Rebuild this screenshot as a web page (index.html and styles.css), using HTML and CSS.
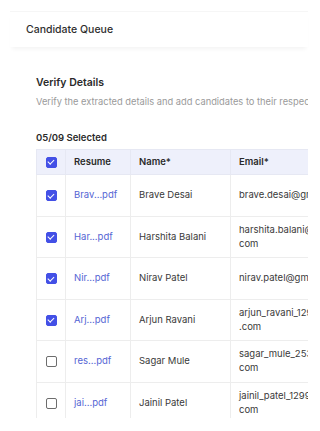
FILE: index.html
```html
<!DOCTYPE html>
<html lang="en">
<head>
    <meta charset="UTF-8">
    <meta name="viewport" content="width=device-width, initial-scale=1.0">
    <title>Candidate Queue</title>
    <link rel="stylesheet" href="styles.css">
</head>
<body>
    <div class="page">
        <div class="topbar">Candidate Queue</div>

        <div class="panel">
            <h2 class="title">Verify Details</h2>
            <p class="subtitle">Verify the extracted details and add candidates to their respective jobs</p>

            <div class="count">05/09 Selected</div>

            <table class="queue">
                <colgroup>
                    <col class="col-check">
                    <col class="col-resume">
                    <col class="col-name">
                    <col class="col-email">
                    <col class="col-phone">
                </colgroup>
                <thead>
                    <tr>
                        <th><span class="box checked"></span></th>
                        <th>Resume</th>
                        <th>Name*</th>
                        <th>Email*</th>
                        <th>Phone*</th>
                    </tr>
                </thead>
                <tbody>
                    <tr>
                        <td><span class="box checked"></span></td>
                        <td><a href="#">Brav...pdf</a></td>
                        <td>Brave Desai</td>
                        <td class="email">brave.desai@gmail.com</td>
                        <td>9876543210</td>
                    </tr>
                    <tr>
                        <td><span class="box checked"></span></td>
                        <td><a href="#">Har...pdf</a></td>
                        <td>Harshita Balani</td>
                        <td class="email">harshita.balani@gmail.<wbr>com</td>
                        <td>9876543211</td>
                    </tr>
                    <tr>
                        <td><span class="box checked"></span></td>
                        <td><a href="#">Nir...pdf</a></td>
                        <td>Nirav Patel</td>
                        <td class="email">nirav.patel@gmail.com</td>
                        <td>9876543212</td>
                    </tr>
                    <tr>
                        <td><span class="box checked"></span></td>
                        <td><a href="#">Arj...pdf</a></td>
                        <td>Arjun Ravani</td>
                        <td class="email">arjun_ravani_1299@gmail<wbr>.com</td>
                        <td>9876543213</td>
                    </tr>
                    <tr>
                        <td><span class="box"></span></td>
                        <td><a href="#">res...pdf</a></td>
                        <td>Sagar Mule</td>
                        <td class="email">sagar_mule_2531@gmail.<wbr>com</td>
                        <td>9876543214</td>
                    </tr>
                    <tr>
                        <td><span class="box"></span></td>
                        <td><a href="#">jai...pdf</a></td>
                        <td>Jainil Patel</td>
                        <td class="email">jainil_patel_1299@gmail.<wbr>com</td>
                        <td>9876543215</td>
                    </tr>
                </tbody>
            </table>
        </div>
    </div>
</body>
</html>
```

FILE: styles.css
```css
body {
    margin: 0;
    background-color: #fff;
    font-family: Inter, "Noto Sans", sans-serif;
    color: #333;
}

.page {
    padding-top: 11px;
}

.topbar {
    height: 35px;
    margin: 0 12px 0 10px;
    padding-left: 16px;
    display: flex;
    align-items: center;
    font-size: 10.5px;
    font-weight: 500;
    color: #2e2e2e;
    border-top: 1px solid #f6f6f6;
    box-shadow: 0 4px 4px -2px rgba(0, 0, 0, 0.05);
}

.panel {
    margin: 0 12px 0 10px;
    padding-left: 26px;
    height: 371px;
    overflow: hidden;
}

.title {
    margin: 29px 0 0;
    font-size: 10.5px;
    line-height: 14px;
    font-weight: 600;
    color: #2a2a2a;
}

.subtitle {
    margin: 6px 0 0;
    font-size: 9.3px;
    line-height: 12px;
    color: #9a9a9a;
    white-space: nowrap;
}

.count {
    margin-top: 24px;
    font-size: 9.5px;
    line-height: 12px;
    font-weight: 600;
    color: #2a2a2a;
}

.queue {
    margin-top: 5px;
    width: 600px;
    table-layout: fixed;
    border-collapse: collapse;
    font-size: 9.5px;
    line-height: 14px;
}

.col-check { width: 29px; }
.col-resume { width: 65px; }
.col-name { width: 100px; }
.col-email { width: 134px; }
.col-phone { width: 272px; }

.queue th,
.queue td {
    border: 1px solid #ededed;
    padding: 0 8px;
    text-align: left;
    vertical-align: middle;
}

.queue th {
    height: 24px;
    background-color: #eef0fb;
    font-weight: 600;
    color: #2a2a2a;
    border-color: #e6e8f3;
}

.queue td {
    height: 40.5px;
    color: #3a3a3a;
}

.queue th:first-child,
.queue td:first-child {
    padding: 0;
    text-align: center;
}

.queue a {
    color: #5565d4;
    text-decoration: none;
}

.email {
    padding-right: 4px;
}

.box {
    display: inline-block;
    box-sizing: border-box;
    width: 11px;
    height: 11px;
    border: 1.5px solid #6d6d6d;
    border-radius: 2px;
    vertical-align: middle;
    position: relative;
}

.box.checked {
    background-color: #4350e6;
    border-color: #4350e6;
}

.box.checked::after {
    content: "";
    position: absolute;
    left: 2.5px;
    top: 0.5px;
    width: 2.5px;
    height: 5px;
    border: solid #fff;
    border-width: 0 1.2px 1.2px 0;
    transform: rotate(45deg);
}
```
